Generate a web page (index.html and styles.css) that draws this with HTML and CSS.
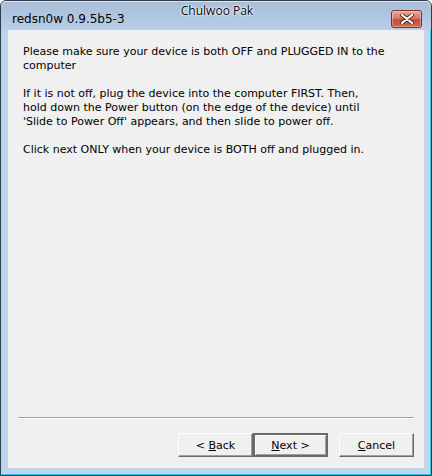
FILE: index.html
```html
<!DOCTYPE html>
<html lang="en">
<head>
    <meta charset="UTF-8">
    <title>redsn0w 0.9.5b5-3</title>
    <link rel="stylesheet" href="styles.css">
</head>
<body>
    <div class="window">
        <div class="titlebar">
            <div class="app-name">redsn0w 0.9.5b5-3</div>
            <div class="caption">Chulwoo Pak</div>
            <button class="close-btn" aria-label="Close">
                <svg width="14" height="10" viewBox="0 0 14 10">
                    <path d="M2 1 L12 9 M12 1 L2 9" stroke="#5a2a24" stroke-width="4" stroke-linecap="round"/>
                    <path d="M2 1 L12 9 M12 1 L2 9" stroke="#fff" stroke-width="2.2" stroke-linecap="round"/>
                </svg>
            </button>
        </div>

        <div class="content">
            <div class="message">
                <p>Please make sure your device is both OFF and PLUGGED IN to the<br>computer</p>
                <p>If it is not off, plug the device into the computer FIRST. Then,<br>hold down the Power button (on the edge of the device) until<br>'Slide to Power Off' appears, and then slide to power off.</p>
                <p>Click next ONLY when your device is BOTH off and plugged in.</p>
            </div>

            <div class="footer">
                <div class="separator"></div>
                <div class="buttons">
                    <button class="wiz-button">&lt; <u>B</u>ack</button>
                    <button class="wiz-button default"><u>N</u>ext &gt;</button>
                    <button class="wiz-button cancel"><u>C</u>ancel</button>
                </div>
            </div>
        </div>
    </div>
</body>
</html>
```

FILE: styles.css
```css
html {
    background-color: #fff;
}

body {
    margin: 0;
    font-family: "DejaVu Sans", Verdana, sans-serif;
    font-size: 11px;
}

.window {
    box-sizing: border-box;
    width: 432px;
    height: 476px;
    display: flex;
    flex-direction: column;
    border: 1px solid #2f3c4a;
    border-radius: 6px 6px 0 0;
    background-color: #bdd5ee;
    box-shadow: inset -1px -1px 0 #3cc6e6;
    padding: 0 7px 7px 7px;
    overflow: hidden;
}

.titlebar {
    height: 29px;
    margin: 0 -7px;
    padding: 0 9px 0 11px;
    display: grid;
    grid-template-columns: 1fr auto 1fr;
    background: linear-gradient(#a7bdd7, #bad0e8);
    box-shadow: inset 0 1px 0 #dbe6f2;
    border-radius: 5px 5px 0 0;
}

.app-name {
    font-size: 12px;
    color: #000;
    padding-top: 11px;
    white-space: nowrap;
}

.caption {
    font-family: "Open Sans", "Noto Sans", sans-serif;
    font-size: 12px;
    color: #000;
    padding-top: 1px;
    text-shadow: 0 0 3px #fff, 0 0 2px #fff, 0 0 1px #fff;
}

.close-btn {
    justify-self: end;
    margin-top: 9px;
    width: 31px;
    height: 18px;
    padding: 0;
    border: 1px solid #7a2f26;
    border-radius: 3px;
    background: linear-gradient(#e4a999 0%, #d47a69 45%, #c24a38 55%, #cf6b55 100%);
    box-shadow: inset 0 0 0 1px rgba(255, 255, 255, 0.35);
    display: flex;
    align-items: center;
    justify-content: center;
}

.content {
    flex: 1;
    display: flex;
    flex-direction: column;
    justify-content: space-between;
    background-color: #f0f0f0;
    padding: 15px 10px 11px 10px;
}

.message {
    padding: 0 0 0 5px;
    line-height: 14px;
    color: #000;
    white-space: nowrap;
}

.message p {
    margin: 0 0 14px 0;
}

.separator {
    height: 1px;
    background-color: #a0a0a0;
    border-bottom: 1px solid #fff;
    margin-bottom: 14px;
}

.buttons {
    display: flex;
    justify-content: flex-end;
}

.wiz-button {
    width: 75px;
    height: 24px;
    font-family: "DejaVu Sans", Verdana, sans-serif;
    font-size: 11px;
    color: #000;
    background-color: #f0f0f0;
    border: 1px solid;
    border-color: #fff #696969 #696969 #fff;
    box-shadow: inset -1px -1px 0 #a0a0a0;
    padding: 0;
}

.wiz-button.default {
    border: 2px solid #6a6a6a;
    box-shadow: inset 1px 1px 0 #fff, inset -1px -1px 0 #a0a0a0;
}

.wiz-button.cancel {
    margin-left: 11px;
}
```
